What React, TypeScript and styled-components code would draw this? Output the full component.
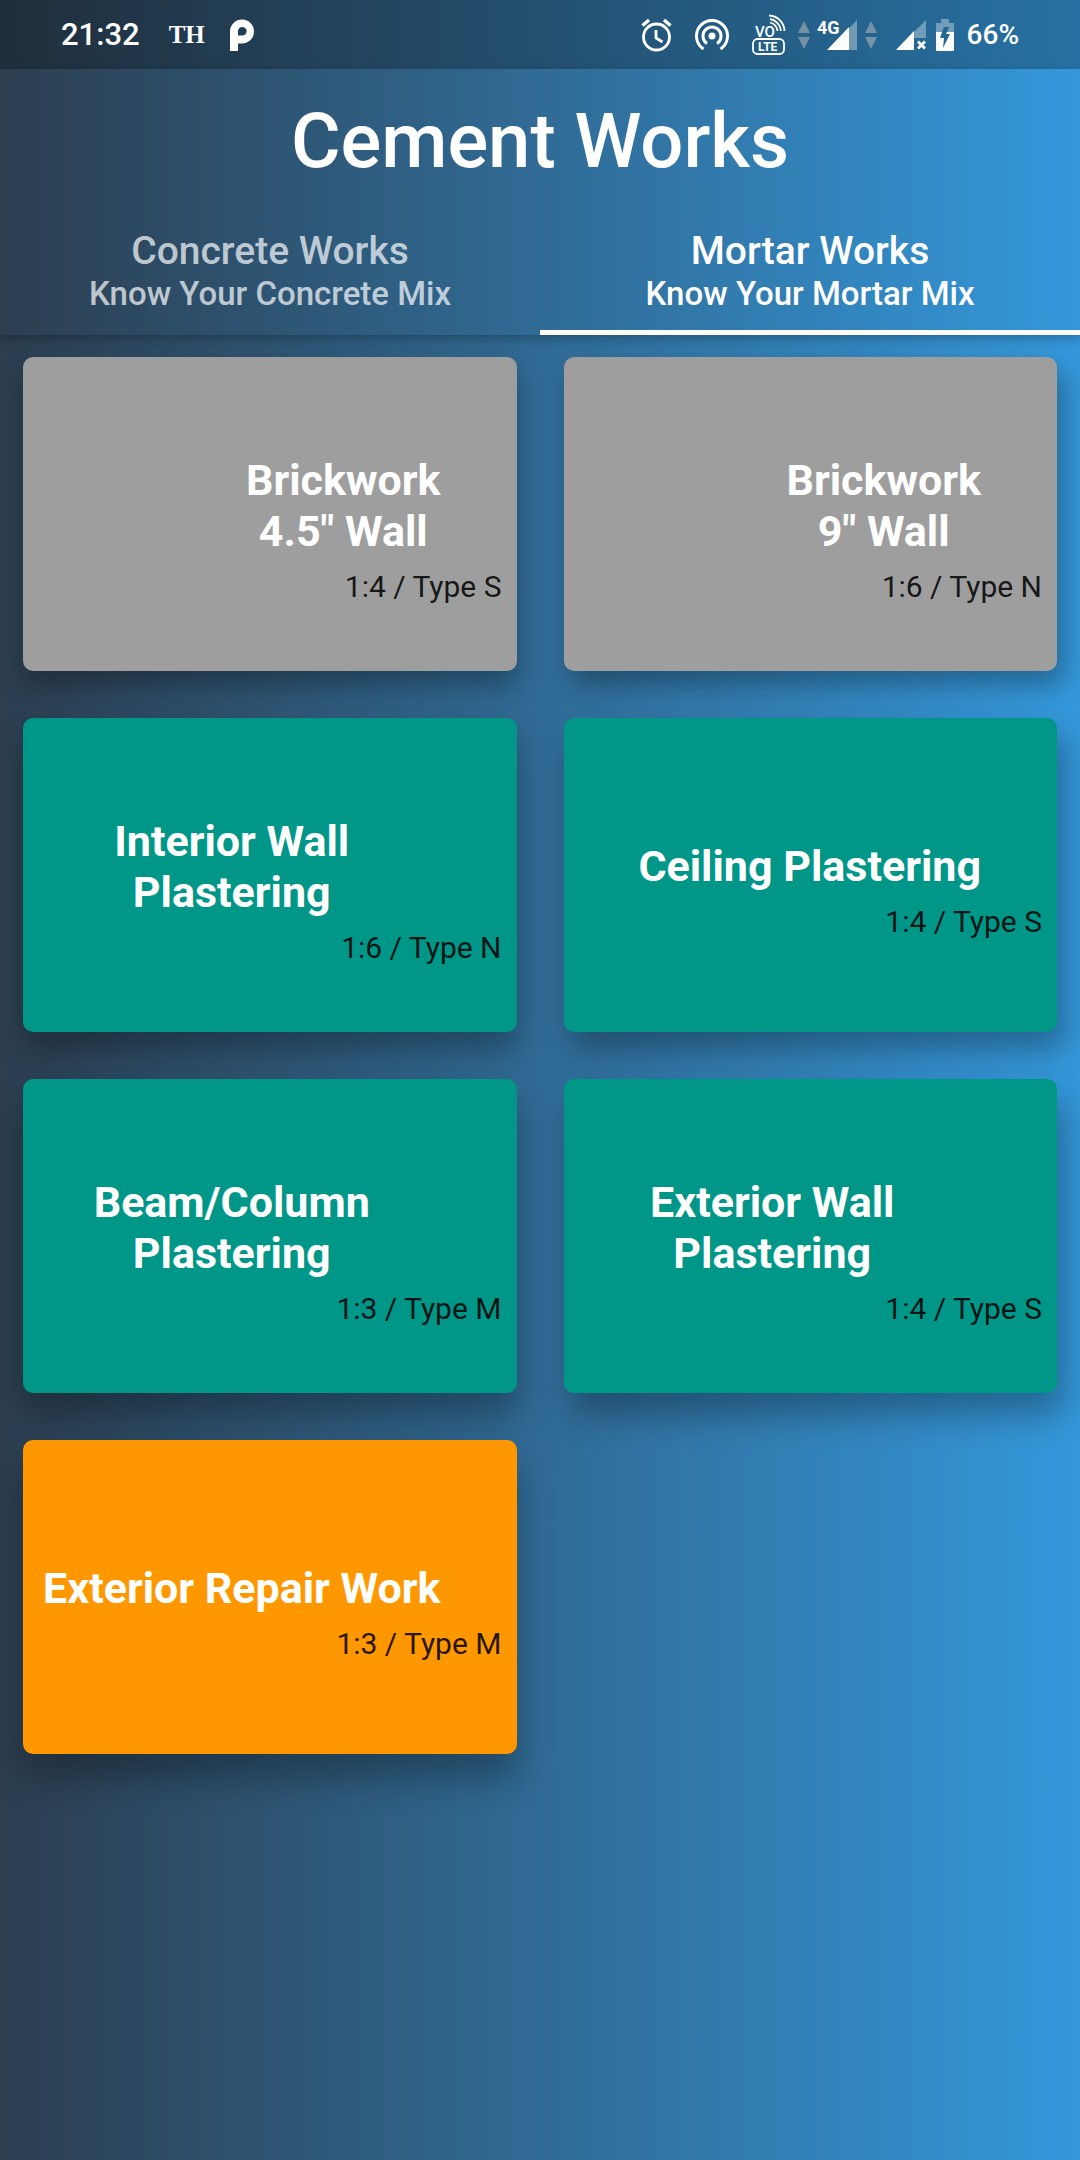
import React from "react";
import styled, { createGlobalStyle } from "styled-components";

const GlobalStyle = createGlobalStyle`
  *, *::before, *::after { box-sizing: border-box; }
  body {
    margin: 0;
    font-family: Roboto, "Liberation Sans", sans-serif;
    color: #fff;
  }
`;

const Screen = styled.div`
  min-height: 100vh;
  display: flex;
  flex-direction: column;
  background: linear-gradient(to right, #2c3e50, #3498db);
`;

const StatusBar = styled.div`
  height: 69px;
  padding: 0 61px;
  display: flex;
  align-items: center;
  justify-content: space-between;
  background: rgba(0, 0, 0, 0.25);
`;

const StatusGroup = styled.div<{ $gap: number; $lead?: number }>`
  display: flex;
  align-items: center;
  gap: ${(p) => p.$gap}px;
  padding-left: ${(p) => p.$lead ?? 0}px;
`;

const Clock = styled.span`
  font-size: 31px;
  font-weight: 500;
`;

const Carrier = styled.span`
  padding-left: 4px;
  font-family: "Liberation Serif", serif;
  font-size: 25px;
  font-weight: 700;
`;

const BatteryText = styled.span`
  font-size: 28px;
  font-weight: 500;
`;

const Glyph = styled.svg`
  display: block;
  flex: none;
`;

const Header = styled.header`
  box-shadow: 0 4px 10px rgba(0, 0, 0, 0.25);
`;

const Title = styled.h1`
  margin: 0;
  padding: 26px 0 26px;
  font-size: 76px;
  line-height: 92px;
  font-weight: 500;
  text-align: center;
`;

const Tabs = styled.div`
  display: grid;
  grid-template-columns: 1fr 1fr;
`;

const Tab = styled.button<{ $active: boolean }>`
  height: 122px;
  padding: 15px 0 0;
  border: 0;
  border-bottom: 5px solid ${(p) => (p.$active ? "#fff" : "transparent")};
  background: none;
  font-family: inherit;
  font-weight: 500;
  color: ${(p) => (p.$active ? "#fff" : "rgba(255, 255, 255, 0.7)")};
  display: flex;
  flex-direction: column;
  align-items: center;
`;

const TabTitle = styled.span`
  font-size: 39px;
  line-height: 46px;
`;

const TabCaption = styled.span`
  font-size: 33px;
  line-height: 40px;
`;

const Grid = styled.main`
  display: grid;
  grid-template-columns: 1fr 1fr;
  gap: 47px;
  padding: 22px 23px;
`;

const Card = styled.button<{ $color: string; $lift: number }>`
  height: 314px;
  padding: 31px 15px 0 0;
  border: 0;
  border-radius: 10px;
  background: ${(p) => p.$color};
  box-shadow: 0 ${(p) => p.$lift}px ${(p) => p.$lift + 12}px rgba(0, 0, 0, 0.3);
  font-family: inherit;
  display: flex;
  flex-direction: column;
  align-items: flex-end;
  justify-content: center;
  gap: 12px;

  &:nth-child(even) {
    box-shadow: 8px ${(p) => p.$lift}px ${(p) => p.$lift + 12}px rgba(0, 0, 0, 0.3);
  }
`;

const CardTitle = styled.span`
  margin-right: 61px;
  font-size: 43px;
  line-height: 51px;
  font-weight: 700;
  color: #fff;
  text-align: center;
  white-space: pre-line;
`;

const CardMix = styled.span`
  font-size: 30px;
  line-height: 36px;
  color: rgba(0, 0, 0, 0.87);
`;

const GREY = "#9e9e9e";
const TEAL = "#009688";
const ORANGE = "#ff9800";

const cards = [
  { title: 'Brickwork\n4.5" Wall', mix: "1:4 / Type S", color: GREY, lift: 14 },
  { title: 'Brickwork\n9" Wall', mix: "1:6 / Type N", color: GREY, lift: 14 },
  { title: "Interior Wall Plastering", mix: "1:6 / Type N", color: TEAL, lift: 18 },
  { title: "Ceiling Plastering", mix: "1:4 / Type S", color: TEAL, lift: 18 },
  { title: "Beam/Column Plastering", mix: "1:3 / Type M", color: TEAL, lift: 22 },
  { title: "Exterior Wall Plastering", mix: "1:4 / Type S", color: TEAL, lift: 22 },
  { title: "Exterior Repair Work", mix: "1:3 / Type M", color: ORANGE, lift: 24 },
];

const tabs = [
  { title: "Concrete Works", caption: "Know Your Concrete Mix", active: false },
  { title: "Mortar Works", caption: "Know Your Mortar Mix", active: true },
];

const ParkingP = () => (
  <Glyph width="24" height="32" viewBox="0 0 24 32">
    <path
      fill="#fff"
      fillRule="evenodd"
      d="M0 32V12a12 12 0 1 1 12 12.500H8V32ZM8 16.500h4a4.300 4.300 0 1 0-4-4.500Z"
    />
  </Glyph>
);

const Alarm = () => (
  <Glyph width="31" height="34" viewBox="0 0 31 34" fill="none" stroke="#fff" strokeWidth="2.800">
    <circle cx="15.500" cy="19" r="13" />
    <path d="M15 12v8l6.500 4" />
    <path d="M1.500 7.500 8 2M29.500 7.500 23 2" strokeWidth="3.500" />
  </Glyph>
);

const Hotspot = () => (
  <Glyph width="34" height="34" viewBox="0 0 34 34" fill="none" stroke="#fff" strokeWidth="3">
    <circle cx="17" cy="18" r="3.500" fill="#fff" stroke="none" />
    <path d="M12 25.500a9 9 0 1 1 10 0" />
    <path d="M8.500 31a15.500 15.500 0 1 1 17 0" />
  </Glyph>
);

const VoLte = () => (
  <Glyph width="34" height="42" viewBox="0 0 34 42" fill="none" stroke="#fff">
    <text x="3" y="23" fontSize="15" fontWeight="500" fill="#fff" stroke="none">VO</text>
    <path
      d="M18 8.500a10 10 0 0 1 7.500 8.500M18 5a13 13 0 0 1 11 12M17 1.500a16 16 0 0 1 15.500 15.500"
      strokeWidth="1.800"
    />
    <rect x="1" y="25" width="31" height="15" rx="4.500" strokeWidth="1.800" />
    <text x="6" y="37" fontSize="12" fontWeight="700" fill="#fff" stroke="none">LTE</text>
  </Glyph>
);

const Arrows = () => (
  <Glyph width="12" height="28" viewBox="0 0 12 28" fill="#b8b8b8" fillOpacity="0.55">
    <path d="M6 0l6 12H0ZM6 28l6-12H0Z" />
  </Glyph>
);

const SignalLte = () => (
  <Glyph width="41" height="44" viewBox="0 0 41 44">
    <path d="M32 15V37h8V7Z" fill="#fff" fillOpacity="0.35" />
    <path d="M32 14v23H10Z" fill="#fff" />
    <text x="0" y="21" fontSize="18" fontWeight="700" fill="#fff">4G</text>
  </Glyph>
);

const SignalOff = () => (
  <Glyph width="31" height="32" viewBox="0 0 31 32">
    <path d="M30 1v18H18v-6Z" fill="#fff" fillOpacity="0.35" />
    <path d="M18 12v19H0Z" fill="#fff" />
    <path d="M22 22.500l7 7M29 22.500l-7 7" stroke="#fff" strokeWidth="2.600" />
  </Glyph>
);

const Battery = () => (
  <Glyph width="20" height="34" viewBox="0 0 20 34" fill="#fff" fillRule="evenodd">
    <path d="M6 1h8v4h5v9H1V5h5ZM9 9h5l-2 5H7Z" fillOpacity="0.35" />
    <path d="M1 14h18v18a1 1 0 0 1-1 1H2a1 1 0 0 1-1-1ZM7 14h5l-1 2h4L8 30l1-10H5Z" />
  </Glyph>
);

export default function App() {
  return (
    <Screen>
      <GlobalStyle />
      <StatusBar>
        <StatusGroup $gap={25}>
          <Clock>21:32</Clock>
          <Carrier>TH</Carrier>
          <ParkingP />
        </StatusGroup>
        <StatusGroup $gap={12}>
          <StatusGroup $gap={23}>
            <Alarm />
            <Hotspot />
            <VoLte />
          </StatusGroup>
          <StatusGroup $gap={7}>
            <Arrows />
            <SignalLte />
            <Arrows />
          </StatusGroup>
          <StatusGroup $gap={8} $lead={7}>
            <SignalOff />
            <Battery />
          </StatusGroup>
          <BatteryText>66%</BatteryText>
        </StatusGroup>
      </StatusBar>
      <Header>
        <Title>Cement Works</Title>
        <Tabs role="tablist">
          {tabs.map((t) => (
            <Tab key={t.title} type="button" role="tab" aria-selected={t.active} $active={t.active}>
              <TabTitle>{t.title}</TabTitle>
              <TabCaption>{t.caption}</TabCaption>
            </Tab>
          ))}
        </Tabs>
      </Header>
      <Grid>
        {cards.map((c) => (
          <Card key={c.title} type="button" $color={c.color} $lift={c.lift}>
            <CardTitle>{c.title}</CardTitle>
            <CardMix>{c.mix}</CardMix>
          </Card>
        ))}
      </Grid>
    </Screen>
  );
}
